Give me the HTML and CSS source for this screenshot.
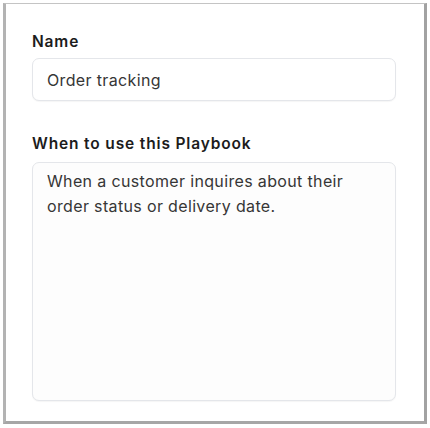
FILE: index.html
```html
<!DOCTYPE html>
<html>
<head>
<meta charset="utf-8">
<link rel="stylesheet" href="styles.css">
</head>
<body>
<div class="frame">
  <div class="field">
    <label class="label">Name</label>
    <div class="input">Order tracking</div>
  </div>
  <div class="field field-grow">
    <label class="label">When to use this Playbook</label>
    <div class="textarea">When a customer inquires about their order status or delivery date.</div>
  </div>
</div>
</body>
</html>
```
FILE: styles.css
```css
html, body {
  margin: 0;
  padding: 0;
  background: #ffffff;
}
body {
  width: 430px;
  height: 428px;
  font-family: Inter, "Liberation Sans", sans-serif;
}
.frame {
  box-sizing: border-box;
  margin: 3px 0 0 3px;
  width: 424px;
  height: 421px;
  border-top: 1px solid #c4c4c4;
  border-left: 3px solid #b3b3b3;
  border-right: 3px solid #a2a2a2;
  border-bottom: 3px solid #a6a6a6;
  background: #ffffff;
  padding: 28px 28px 20px 26px;
  display: flex;
  flex-direction: column;
  gap: 33px;
}
.field {
  display: flex;
  flex-direction: column;
  gap: 6px;
}
.field-grow {
  flex: 1;
  gap: 8px;
}
.label {
  font-size: 15.5px;
  line-height: 20px;
  font-weight: 600;
  letter-spacing: 0.85px;
  color: #1c1c1c;
}
.input, .textarea {
  box-sizing: border-box;
  border: 1px solid #e4e6ea;
  border-radius: 7px;
  background: #ffffff;
  box-shadow: 0 1px 1px rgba(0, 0, 0, 0.04);
  color: #363636;
  font-size: 16px;
  letter-spacing: 0.35px;
}
.input {
  height: 43px;
  padding: 0 14px;
  display: flex;
  align-items: center;
}
.textarea {
  flex: 1;
  padding: 6px 14px;
  line-height: 25px;
  background: #fdfdfd;
}
```
